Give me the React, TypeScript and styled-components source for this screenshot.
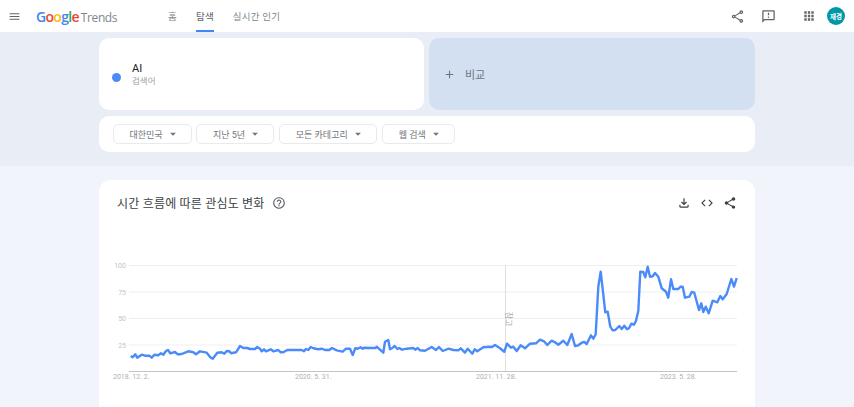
import React from 'react';
import styled, { createGlobalStyle } from 'styled-components';
import {
  MdMenu,
  MdOutlineShare,
  MdShare,
  MdOutlineFeedback,
  MdApps,
  MdOutlineFileDownload,
  MdCode,
  MdHelpOutline,
  MdAdd,
  MdArrowDropDown,
} from 'react-icons/md';

const fontStack = `Roboto, 'Noto Sans CJK KR', sans-serif`;

const GlobalStyle = createGlobalStyle`
  html, body {
    margin: 0;
    height: 407px;
    overflow: hidden;
    background: #f1f4fa;
    font-family: ${fontStack};
  }
`;

const Header = styled.header`
  display: flex;
  align-items: center;
  height: 32px;
  background: #fff;
  padding: 0 9px 0 8px;
  box-sizing: border-box;
`;

const MenuButton = styled.span`
  display: flex;
  color: #5f6368;
  margin-right: 15px;
`;

const Logo = styled.div`
  display: flex;
  align-items: baseline;
  width: 132px;
  font-size: 12px;
  font-family: 'Open Sans', sans-serif;
  color: #80868b;
  letter-spacing: -0.4px;
`;

const GoogleWord = styled.span`
  font-family: 'Open Sans', sans-serif;
  font-size: 14px;
  font-weight: 600;
  margin-right: 2px;
  letter-spacing: -0.7px;
`;

const Letter = styled.span<{ $color: string }>`
  color: ${({ $color }) => $color};
`;

const Nav = styled.nav`
  display: flex;
  height: 32px;
  gap: 19px;
`;

const NavItem = styled.a<{ $active?: boolean }>`
  display: flex;
  align-items: center;
  font-size: 9.5px;
  letter-spacing: 0.2px;
  color: ${({ $active }) => ($active ? '#5f6368' : '#80868b')};
  border-bottom: 2px solid ${({ $active }) => ($active ? '#4285f4' : 'transparent')};
  padding-top: 1px;
  box-sizing: border-box;
`;

const HeaderActions = styled.div`
  display: flex;
  align-items: center;
  margin-left: auto;
  color: #5f6368;
`;

const HeaderIcon = styled.span<{ $gap: number }>`
  display: flex;
  margin-right: ${({ $gap }) => $gap}px;
`;

const Avatar = styled.span`
  display: flex;
  align-items: center;
  justify-content: center;
  width: 18px;
  height: 18px;
  border-radius: 50%;
  background: #0097a7;
  color: #fff;
  font-size: 6.5px;
  font-weight: 700;
`;

const Hero = styled.section`
  display: flex;
  flex-direction: column;
  gap: 6px;
  height: 134px;
  box-sizing: border-box;
  padding: 6px 99px 0;
  background: #e8edf6;
`;

const SearchRow = styled.div`
  display: flex;
  gap: 5px;
`;

const TermCard = styled.div`
  display: flex;
  align-items: center;
  flex: 1;
  height: 72px;
  padding-left: 13px;
  box-sizing: border-box;
  background: #fff;
  border-radius: 10px;
`;

const TermDot = styled.span`
  width: 9px;
  height: 9px;
  border-radius: 50%;
  background: #4b8bf9;
  margin-right: 11px;
  margin-top: 6px;
`;

const TermText = styled.div`
  display: flex;
  flex-direction: column;
`;

const TermName = styled.span`
  font-size: 11px;
  line-height: 13px;
  color: #202124;
`;

const TermType = styled.span`
  font-size: 8.5px;
  line-height: 12px;
  color: #9aa0a6;
`;

const CompareCard = styled.div`
  display: flex;
  align-items: center;
  flex: 1;
  height: 72px;
  padding-left: 14px;
  gap: 9px;
  box-sizing: border-box;
  background: #d2e0f2;
  border-radius: 10px;
  color: #70757a;
  font-size: 11px;
`;

const FilterCard = styled.div`
  display: flex;
  align-items: center;
  gap: 4.75px;
  height: 36px;
  padding-left: 13.5px;
  box-sizing: border-box;
  background: #fff;
  border-radius: 10px;
`;

const Chip = styled.div<{ $width: number }>`
  display: flex;
  align-items: center;
  justify-content: center;
  gap: 3px;
  width: ${({ $width }) => $width}px;
  height: 20px;
  padding-left: 5px;
  box-sizing: border-box;
  border: 1px solid #e8eaed;
  border-radius: 5px;
  color: #70757a;
  font-size: 9px;
`;

const Main = styled.main`
  padding: 14px 99px 0;
`;

const ChartCard = styled.div`
  background: #fff;
  border-radius: 12px;
  height: 240px;
  padding-top: 14px;
  box-sizing: border-box;
`;

const ChartHeader = styled.div`
  display: flex;
  align-items: center;
  height: 17px;
  padding: 0 18px;
`;

const ChartTitle = styled.h2`
  margin: 0 7px 0 0;
  font-size: 12px;
  font-weight: 400;
  color: #3c4043;
  letter-spacing: 0.2px;
`;

const HelpIcon = styled.span`
  display: flex;
  color: #5f6368;
`;

const ChartActions = styled.div`
  display: flex;
  align-items: center;
  gap: 9px;
  margin-left: auto;
  color: #3c4043;
`;

const ChartSvg = styled.svg`
  display: block;
  margin-top: 19px;
`;

const raw =
  '130.7,356 132.7,357.3 135.3,354.3 137.3,357.7 141.7,354.7 145,355.7 149.3,355.7 151.7,357.7 154.3,354.7 158.3,355.3 161,353.3 163.3,354.7 166,351 168,350 170.3,353.3 175,352 177.7,354.3 180,354.3 183.3,353.3 188.3,351.3 193.3,352.3 196,354.3 200,351.3 206.7,352.7 210.7,357.7 212.7,358.7 217.3,352.7 221.7,352.3 224.3,353.7 226.7,351 229.3,351.3 231,353.3 236,352.3 240,346 243.3,348 247.3,348 250,349 255,349 257.3,347 260,348.7 261.7,351.3 264,349.3 266,351.3 270.7,349.3 273.3,351.3 278.3,350 280.7,352.3 283.3,352.3 287.3,350 301.7,350 304,351.3 306,349 308.3,350 310.7,347 313.3,348.3 318.3,349.3 321.7,348.7 325,350 329.3,350 332,348 336.7,350.3 342.7,351.7 346,348.7 350,348.7 352.7,355 355.3,348.3 357.7,348.7 360.7,347.3 362.7,348.7 364,347.7 371.7,348 375.7,348 376.7,346.7 383.3,352.7 385,341.7 388.3,340 390,349.3 392.7,347.7 394.7,346 397.3,349 399.3,348 402,349.7 406.7,348.7 413.3,348 415.3,349.7 417.7,348 420,350.3 425,350.7 431.7,347 436,350 439,347 442.7,351 448.7,348.7 453.3,350 458.3,350.3 460.7,348.3 465,352.7 467.7,348.7 472.3,353.7 474.7,349.3 477.3,351.3 483.3,347.3 490,346.7 492,347 495,345 500,348.3 504.3,351.7 507,343.7 511,347.7 513.3,346.7 516.7,351 520.7,345.3 525,348.3 530,343.7 536,343.3 540,339.7 544,341.3 547.3,345 551.7,340.7 555,342.3 558.3,344.7 563.3,340.7 567.3,345 571.7,334 575,346 578.3,345.3 581.7,342.7 584.3,342 586.7,344 591,335.3 593.3,338.7 595.7,334.3 598.3,286.7 600.7,271.7 605.3,312.3 607.7,311.7 610.3,326.7 612.7,330.3 615.3,330 619.3,326 621.7,329 624.3,325.7 627,329.3 629,328.3 631.3,323.7 634,324.7 636,320.7 638.3,311 640.3,271.7 643.3,272 645.3,277.3 647.7,266.7 650,276.7 652.7,276.3 655,273 658.3,276.7 661.7,288.3 666,291.7 668.3,297.7 671,279.3 673.3,289 678.3,289 680.7,286.7 682.7,286.7 685,297.7 689.3,296.7 691.7,292 694.3,292.7 699,310 701.3,303.3 703.3,312 705.7,306.7 708.7,313.3 712.7,300.7 717.3,302.3 720.3,296 722.7,299.3 726.7,294 731.3,279 734,286.7 736.7,278';

const gridLines = [
  { y: 265.5, label: '100' },
  { y: 292, label: '75' },
  { y: 318.5, label: '50' },
  { y: 345, label: '25' },
];

const dateLabels = [
  { x: 113, label: '2018. 12. 2.' },
  { x: 295, label: '2020. 5. 31.' },
  { x: 476, label: '2021. 11. 28.' },
  { x: 660, label: '2023. 5. 28.' },
];

const chips = [
  { label: '대한민국', width: 79 },
  { label: '지난 5년', width: 77.5 },
  { label: '모든 카테고리', width: 98.5 },
  { label: '웹 검색', width: 73 },
];

const App = () => (
  <>
    <GlobalStyle />
    <Header>
      <MenuButton>
        <MdMenu size={13} />
      </MenuButton>
      <Logo>
        <GoogleWord>
          <Letter $color="#4285f4">G</Letter>
          <Letter $color="#ea4335">o</Letter>
          <Letter $color="#fbbc05">o</Letter>
          <Letter $color="#4285f4">g</Letter>
          <Letter $color="#34a853">l</Letter>
          <Letter $color="#ea4335">e</Letter>
        </GoogleWord>
        Trends
      </Logo>
      <Nav>
        <NavItem>홈</NavItem>
        <NavItem $active>탐색</NavItem>
        <NavItem>실시간 인기</NavItem>
      </Nav>
      <HeaderActions>
        <HeaderIcon $gap={16}>
          <MdOutlineShare size={15} />
        </HeaderIcon>
        <HeaderIcon $gap={26}>
          <MdOutlineFeedback size={15} />
        </HeaderIcon>
        <HeaderIcon $gap={11}>
          <MdApps size={14} />
        </HeaderIcon>
        <Avatar>재경</Avatar>
      </HeaderActions>
    </Header>
    <Hero>
      <SearchRow>
        <TermCard>
          <TermDot />
          <TermText>
            <TermName>AI</TermName>
            <TermType>검색어</TermType>
          </TermText>
        </TermCard>
        <CompareCard>
          <MdAdd size={13} />
          비교
        </CompareCard>
      </SearchRow>
      <FilterCard>
        {chips.map((chip) => (
          <Chip key={chip.label} $width={chip.width}>
            {chip.label}
            <MdArrowDropDown size={14} />
          </Chip>
        ))}
      </FilterCard>
    </Hero>
    <Main>
      <ChartCard>
        <ChartHeader>
          <ChartTitle>시간 흐름에 따른 관심도 변화</ChartTitle>
          <HelpIcon>
            <MdHelpOutline size={14} />
          </HelpIcon>
          <ChartActions>
            <MdOutlineFileDownload size={14} />
            <MdCode size={14} />
            <MdShare size={14} />
          </ChartActions>
        </ChartHeader>
        <ChartSvg width="656" height="177" viewBox="99 230 656 177">
          {gridLines.map((g) => (
            <g key={g.label}>
              <line x1="129" x2="737" y1={g.y} y2={g.y} stroke="#efefef" strokeWidth="1" />
              <text x="126" y={g.y + 2.5} textAnchor="end" fontSize="7" fill="#c4c4c4" fontFamily={fontStack}>
                {g.label}
              </text>
            </g>
          ))}
          <line x1="129" x2="737" y1="371.5" y2="371.5" stroke="#c4c4c4" strokeWidth="1" />
          <line x1="505.5" x2="505.5" y1="265" y2="371" stroke="#e0e0e0" strokeWidth="1" />
          <text x="506" y="319" textAnchor="middle" fontSize="8" fill="#a8a8a8" fontFamily={fontStack} transform="rotate(90 506 319)">
            참고
          </text>
          <polyline points={raw} fill="none" stroke="#4b8bf9" strokeWidth="2.4" strokeLinejoin="round" />
          {dateLabels.map((d) => (
            <text key={d.label} x={d.x} y="379" fontSize="7" fill="#b0b0b0" fontFamily={fontStack}>
              {d.label}
            </text>
          ))}
        </ChartSvg>
      </ChartCard>
    </Main>
  </>
);

export default App;
